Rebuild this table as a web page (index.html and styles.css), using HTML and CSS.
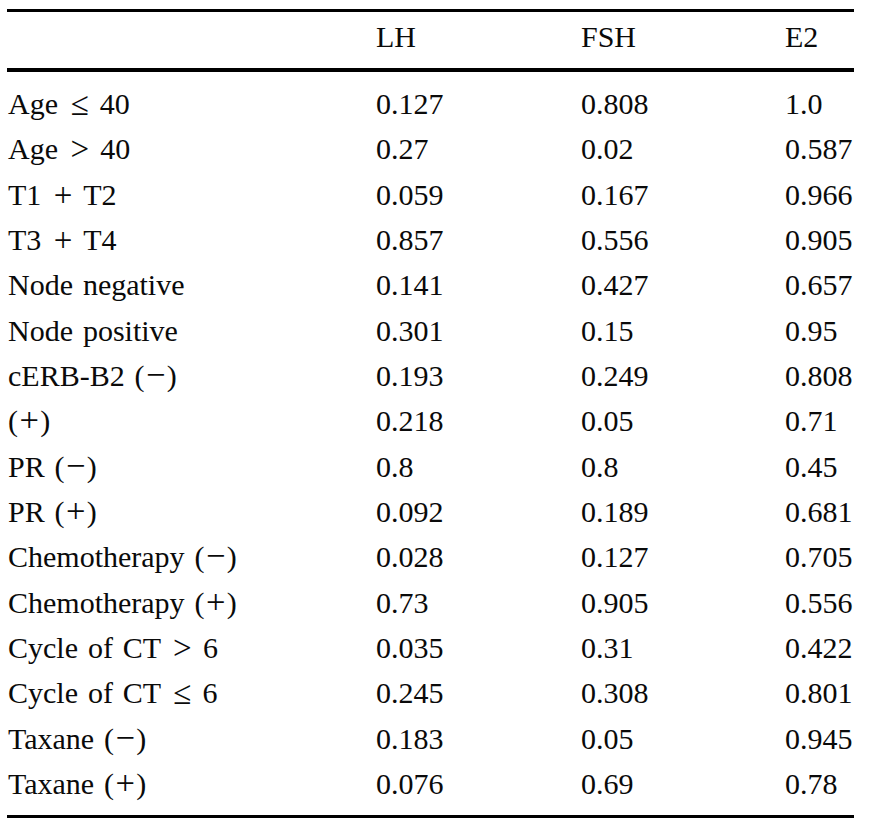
FILE: index.html
```html
<!DOCTYPE html>
<html>
<head>
<meta charset="utf-8">
<link rel="stylesheet" href="styles.css">
</head>
<body>
<table class="data">
  <colgroup>
    <col class="c-label">
    <col class="c-lh">
    <col class="c-fsh">
    <col class="c-e2">
  </colgroup>
  <thead>
    <tr><th></th><th>LH</th><th>FSH</th><th>E2</th></tr>
  </thead>
  <tbody>
    <tr class="first"><td>Age <span class="op">≤</span> 40</td><td>0.127</td><td>0.808</td><td>1.0</td></tr>
    <tr><td>Age <span class="op">&gt;</span> 40</td><td>0.27</td><td>0.02</td><td>0.587</td></tr>
    <tr><td>T1 <span class="op">+</span> T2</td><td>0.059</td><td>0.167</td><td>0.966</td></tr>
    <tr><td>T3 <span class="op">+</span> T4</td><td>0.857</td><td>0.556</td><td>0.905</td></tr>
    <tr><td>Node negative</td><td>0.141</td><td>0.427</td><td>0.657</td></tr>
    <tr><td>Node positive</td><td>0.301</td><td>0.15</td><td>0.95</td></tr>
    <tr><td>cERB-B2 (<span class="sign">−</span>)</td><td>0.193</td><td>0.249</td><td>0.808</td></tr>
    <tr><td>(<span class="sign">+</span>)</td><td>0.218</td><td>0.05</td><td>0.71</td></tr>
    <tr><td>PR (<span class="sign">−</span>)</td><td>0.8</td><td>0.8</td><td>0.45</td></tr>
    <tr><td>PR (<span class="sign">+</span>)</td><td>0.092</td><td>0.189</td><td>0.681</td></tr>
    <tr><td>Chemotherapy (<span class="sign">−</span>)</td><td>0.028</td><td>0.127</td><td>0.705</td></tr>
    <tr><td>Chemotherapy (<span class="sign">+</span>)</td><td>0.73</td><td>0.905</td><td>0.556</td></tr>
    <tr><td>Cycle of CT <span class="op">&gt;</span> 6</td><td>0.035</td><td>0.31</td><td>0.422</td></tr>
    <tr><td>Cycle of CT <span class="op">≤</span> 6</td><td>0.245</td><td>0.308</td><td>0.801</td></tr>
    <tr><td>Taxane (<span class="sign">−</span>)</td><td>0.183</td><td>0.05</td><td>0.945</td></tr>
    <tr class="last"><td>Taxane (<span class="sign">+</span>)</td><td>0.076</td><td>0.69</td><td>0.78</td></tr>
  </tbody>
</table>
</body>
</html>
```
FILE: styles.css
```css
html, body {
  margin: 0;
  padding: 0;
  background: #fff;
}
body {
  padding: 9px 0 0 7px;
  font-family: "Liberation Serif", "Times New Roman", serif;
  color: #0a0a0a;
}
.data {
  border-collapse: collapse;
  width: 847px;
  table-layout: fixed;
  border-top: 3px solid #000;
  border-bottom: 3px solid #000;
  font-size: 30px;
}
.c-label { width: 369px; }
.c-lh { width: 205px; }
.c-fsh { width: 204px; }
.c-e2 { width: 69px; }
.data th {
  font-weight: normal;
  text-align: left;
  line-height: 50px;
  padding: 0 0 6px 0;
  border-bottom: 4px solid #000;
  white-space: nowrap;
}
.data td {
  line-height: 45.33px;
  padding: 0;
  white-space: nowrap;
  vertical-align: baseline;
}
.data td:first-child {
  padding-left: 1px;
  word-spacing: 0.08em;
}
.op {
  font-size: 1.1em;
  line-height: 0;
  word-spacing: 0;
  margin: 0 0.04em 0 0.08em;
  vertical-align: -0.03em;
}
.sign {
  font-size: 1.15em;
  line-height: 0;
  margin: 0 0.04em;
}
.data tr.first td {
  padding-top: 9px;
}
.data tr.last td {
  padding-bottom: 8.5px;
}
```
